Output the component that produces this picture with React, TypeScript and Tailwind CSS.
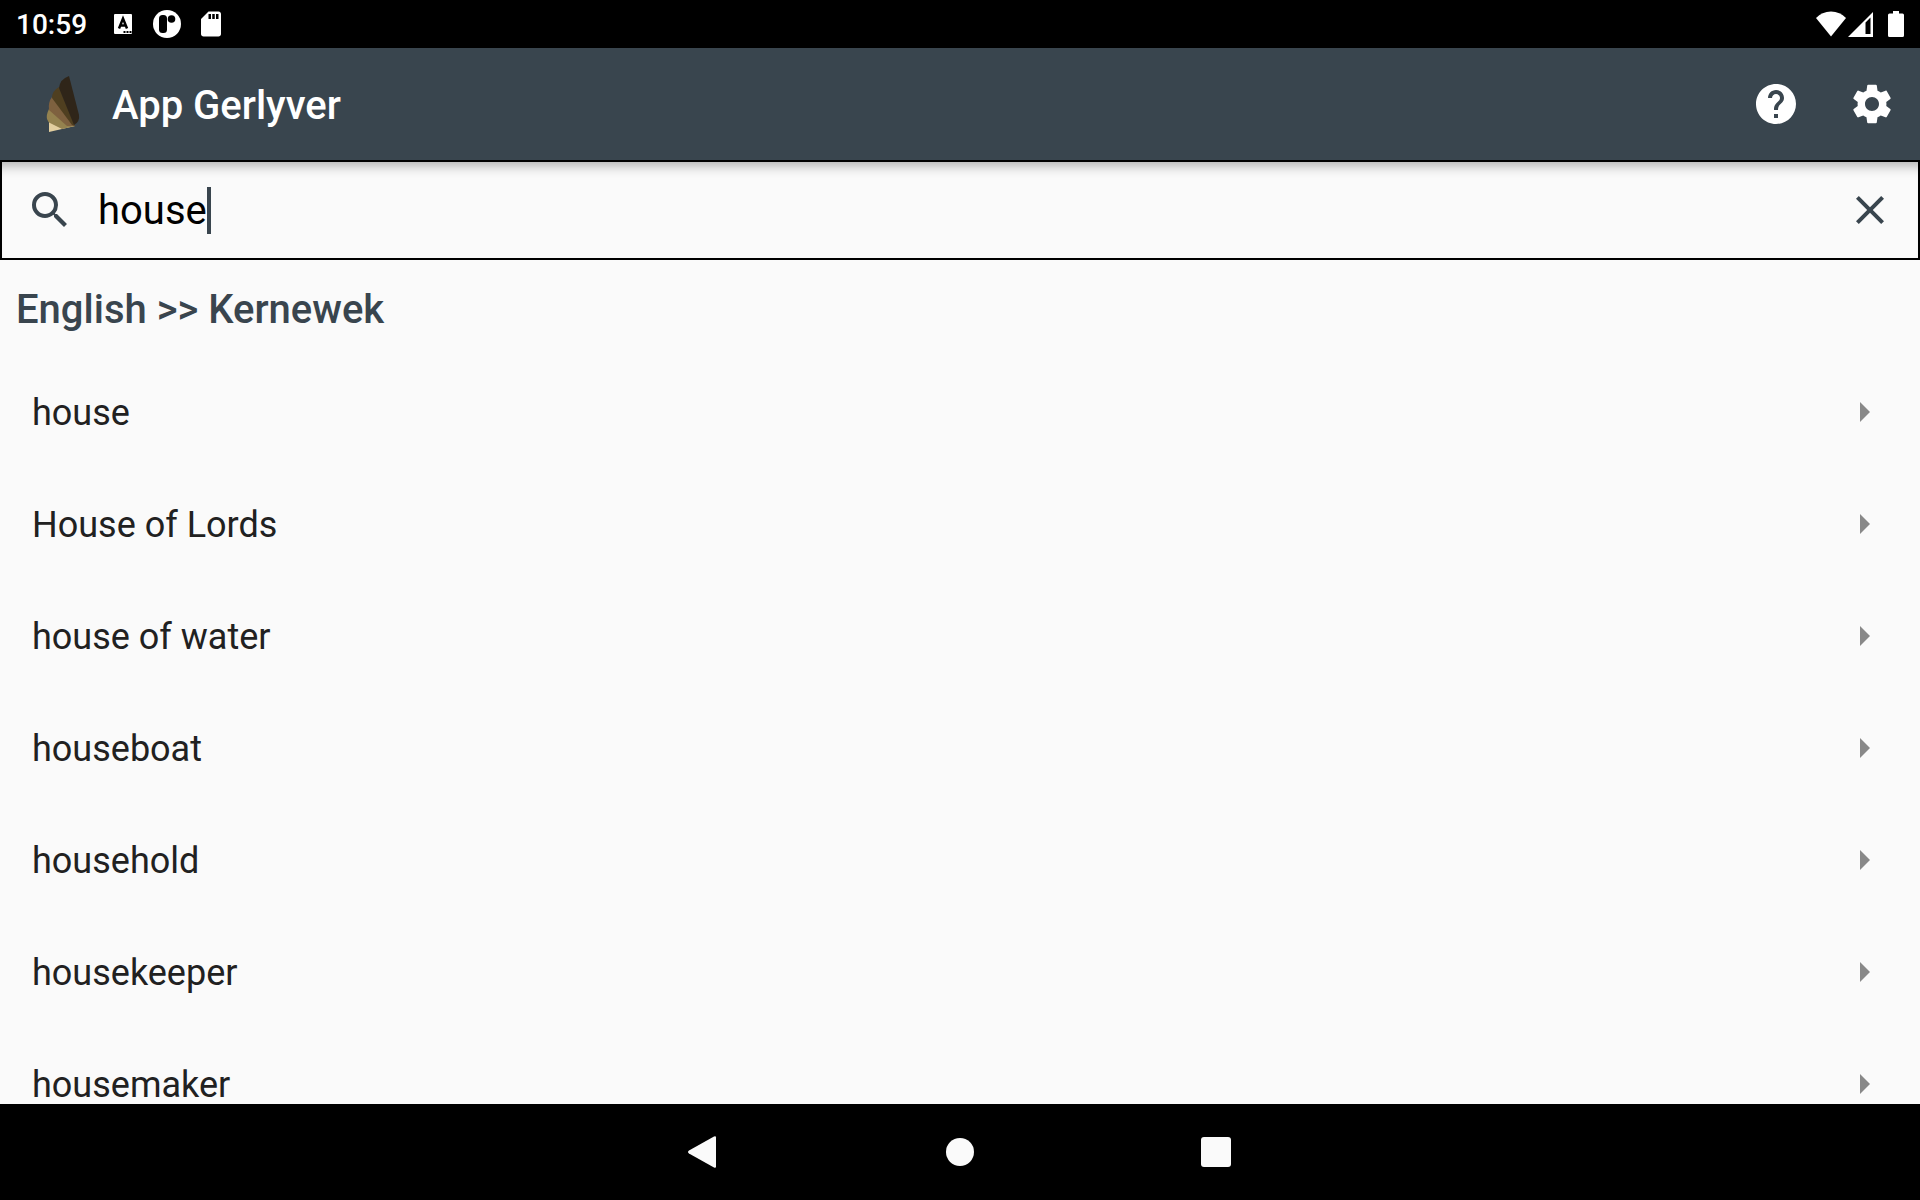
import { useState } from 'react'
import { MdArrowRight, MdClose, MdHelp, MdSdCard, MdSearch } from 'react-icons/md'

const WORDS = [
    'house',
    'House of Lords',
    'house of water',
    'houseboat',
    'household',
    'housekeeper',
    'housemaker'
]

function ShellLogo() {
    return (
        <svg viewBox="0 0 64 64" className="size-16" aria-hidden="true">
            <path d="M17 50 L17 60 L30 57 L43 54 Z" fill="#e3cfa0" />
            <path d="M17 37 Q14 43 15 47 Q16 50 18 51 L30 57 L43 54 Z" fill="#94824f" />
            <path d="M20 25 Q16 30 17 38 L35 54 L43 54 Z" fill="#7e613f" />
            <path d="M27 15 Q20 19 20 26 L40 53 L43 54 Z" fill="#4f3f20" />
            <path d="M37 4 Q28 7 27 16 L42 53 Q48 50 47 43 Z" fill="#2f2519" />
        </svg>
    )
}

function StatusBar() {
    return (
        <div className="flex h-12 shrink-0 items-center justify-between bg-black px-4 text-white">
            <div className="flex items-center">
                <span className="pt-0.5 text-[28px] leading-8 font-medium">10:59</span>
                <svg viewBox="0 0 20 20" className="ml-[26px] size-5" aria-hidden="true">
                    <rect x="1" width="18" height="20" rx="1" fill="currentColor" />
                    <path d="M6 14.500 L10 4.500 L14 14.500 M7.500 11.500 H12.500" fill="none" stroke="#000" strokeWidth="2.500" />
                    <path d="M10.500 17h2v2h-2z M13.500 17h2v2h-2z M16.500 17h2v2h-2z" fill="#000" />
                </svg>
                <svg viewBox="0 0 28 28" className="ml-5 size-7" aria-hidden="true">
                    <circle cx="14" cy="14" r="14" fill="currentColor" />
                    <rect x="6" y="5" width="8" height="18" rx="3.5" fill="#000" />
                    <circle cx="18.5" cy="9" r="3.8" fill="#000" />
                </svg>
                <MdSdCard className="ml-[15px] size-[30px]" />
            </div>
            <div className="flex items-center">
                <svg viewBox="0 0 30 26" className="h-[26px] w-[30px]" aria-hidden="true">
                    <path d="M0 7 Q6 0.5 15 0.5 Q24 0.5 30 7 L15 25.5 Z" fill="currentColor" />
                </svg>
                <svg viewBox="0 0 26 26" className="ml-0.5 size-[26px]" aria-hidden="true">
                    <path fillRule="evenodd" d="M25 1 V26 H0 Z M22.500 6.500 L17.500 11.500 V23 H22.500 Z" fill="currentColor" />
                </svg>
                <svg viewBox="0 0 16 26" className="ml-3.5 h-[26px] w-4" aria-hidden="true">
                    <path d="M5 0h6v2.500h3.500Q16 2.500 16 4v20.500Q16 26 14.500 26h-13Q0 26 0 24.500V4Q0 2.500 1.500 2.500H5z" fill="currentColor" />
                </svg>
            </div>
        </div>
    )
}

function NavBar() {
    return (
        <nav className="flex h-24 shrink-0 justify-center bg-black text-[#fafafa]">
            <button type="button" aria-label="Back" className="flex w-64 items-center justify-center">
                <svg viewBox="0 0 32 34" className="h-[34px] w-8">
                    <path d="M28 2.500 V31.500 Q28 33.500 26 32.500 L1 18.500 Q-1 17 1 15.500 L26 1.500 Q28 0.500 28 2.500 Z" fill="currentColor" />
                </svg>
            </button>
            <button type="button" aria-label="Home" className="flex w-64 items-center justify-center">
                <span className="size-7 rounded-full bg-[#fafafa]" />
            </button>
            <button type="button" aria-label="Recent apps" className="flex w-64 items-center justify-center">
                <span className="size-[30px] rounded-[3px] bg-[#fafafa]" />
            </button>
        </nav>
    )
}

export default function App() {
    const [query, setQuery] = useState('house')

    return (
        <div className="flex h-screen flex-col bg-[#fafafa] font-[Roboto,sans-serif]">
            <StatusBar />

            <header className="flex h-28 shrink-0 items-center bg-[#39454e] pl-8 text-white">
                <ShellLogo />
                <h1 className="ml-4 flex-1 pt-1 text-[40px] leading-12 font-medium">App Gerlyver</h1>
                <button type="button" aria-label="Help" className="p-6">
                    <MdHelp className="size-12" />
                </button>
                <button type="button" aria-label="Settings" className="p-6">
                    <svg viewBox="0 0 24 24" className="size-12" fill="currentColor">
                        <path d="M19.140 12.940c.04-.3.06-.61.06-.94 0-.32-.02-.64-.07-.94l2.030-1.580c.18-.14.23-.41.12-.61l-1.920-3.320c-.12-.22-.37-.29-.59-.22l-2.390.96c-.5-.38-1.030-.7-1.620-.94l-.36-2.540c-.04-.24-.24-.41-.48-.41h-3.840c-.24 0-.43.17-.47.41l-.36 2.540c-.59.24-1.130.57-1.620.94l-2.390-.96c-.22-.08-.47 0-.59.22L2.740 8.870c-.12.21-.08.47.12.61l2.030 1.580c-.05.3-.09.63-.09.94s.02.64.07.94l-2.030 1.580c-.18.14-.23.41-.12.61l1.920 3.320c.12.22.37.29.59.22l2.390-.96c.5.38 1.030.7 1.620.94l.36 2.540c.05.24.24.41.48.41h3.840c.24 0 .44-.17.47-.41l.36-2.540c.59-.24 1.130-.56 1.620-.94l2.390.96c.22.08.47 0 .59-.22l1.920-3.320c.12-.22.07-.47-.12-.61l-2.010-1.580zM12 15.500c-1.930 0-3.500-1.570-3.500-3.500s1.570-3.500 3.500-3.500 3.500 1.570 3.500 3.500-1.570 3.500-3.500 3.500z" />
                    </svg>
                </button>
            </header>

            <div className="flex h-[100px] shrink-0 items-center border-2 border-black px-6 text-[#39454e] shadow-[inset_0_14px_12px_-10px_rgba(0,0,0,0.3)]">
                <MdSearch className="size-12" />
                <div className="ml-6 flex flex-1 items-center">
                    <input
                        type="text"
                        aria-label="Search"
                        value={query}
                        onChange={e => setQuery(e.target.value)}
                        className="field-sizing-content h-14 pt-0.5 text-[40px] text-black caret-transparent outline-none"
                    />
                    {/* thick cursor after the text */}
                    <span className="h-[47px] w-1 bg-[#39454e]" />
                </div>
                <button type="button" aria-label="Clear" onClick={() => setQuery('')}>
                    <MdClose className="size-12" />
                </button>
            </div>

            <main className="min-h-0 flex-1 overflow-hidden">
                <h2 className="flex h-24 items-center px-4 pt-1 text-[40px] font-medium text-[#39454e]">
                    English &gt;&gt; Kernewek
                </h2>
                <ul>
                    {WORDS.map(word => (
                        <li key={word}>
                            <button
                                type="button"
                                className="flex h-28 w-full items-center justify-between px-8 text-left text-4xl text-[#212121]"
                            >
                                <span className="pt-0.5">{word}</span>
                                <MdArrowRight className="size-12 text-[#888888]" />
                            </button>
                        </li>
                    ))}
                </ul>
            </main>

            <NavBar />
        </div>
    )
}
